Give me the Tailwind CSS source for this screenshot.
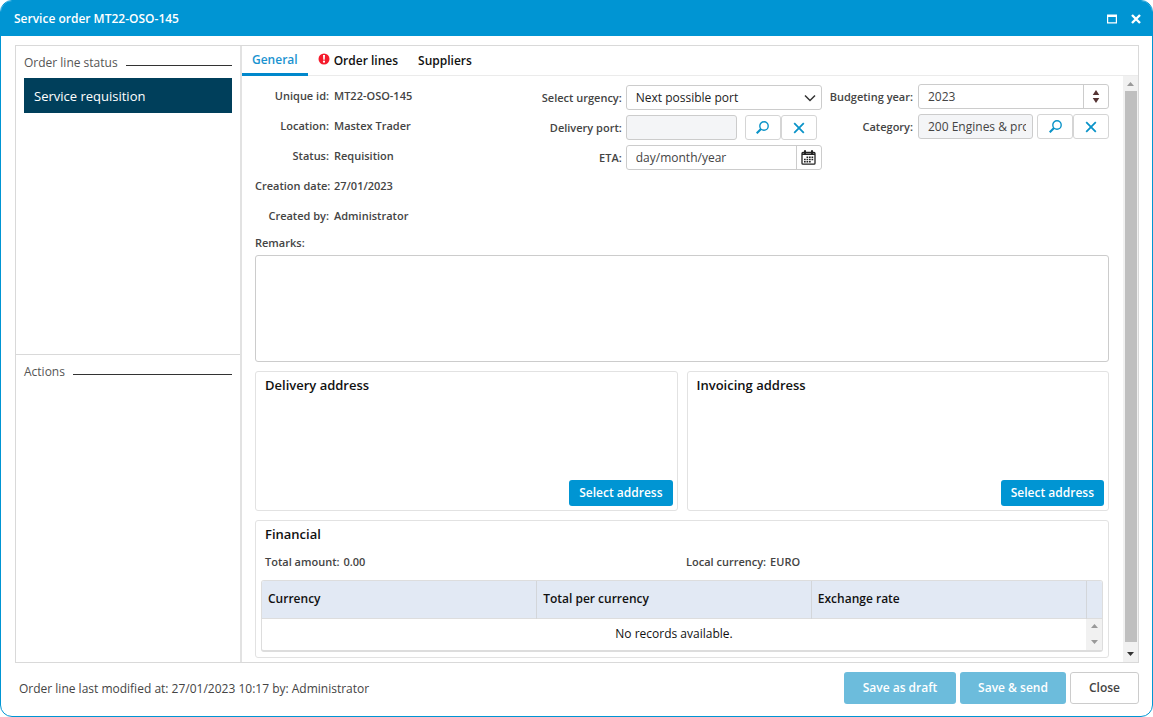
<!DOCTYPE html>
<html lang="en">
<head>
<meta charset="utf-8">
<meta name="viewport" content="width=device-width, initial-scale=1">
<title>Service order MT22-OSO-145</title>
<script src="https://cdn.jsdelivr.net/npm/@tailwindcss/browser@4"></script>
</head>
<body class="min-h-screen bg-white font-['Open_Sans','Noto_Sans',sans-serif] text-[12px] leading-4 text-[#444]">
<div class="flex min-h-screen flex-col overflow-hidden rounded-xl border border-[#0095d3] bg-white">
  <header class="flex h-[35px] items-center justify-between bg-[#0095d3] pr-2.5 pl-[13px] text-white">
    <h1 class="text-[12px] font-semibold">Service order MT22-OSO-145</h1>
    <div class="flex items-center gap-3">
      <button type="button" aria-label="Maximize"><svg class="block h-3 w-3" viewBox="0 0 12 12"><path d="M1 1.500h10v9H1z M2.200 4v5.300h7.600V4z" fill="#fff" fill-rule="evenodd"/></svg></button>
      <button type="button" aria-label="Close window"><svg class="block h-3 w-3" viewBox="0 0 12 12"><path d="M2 2l8 8M10 2l-8 8" stroke="#fff" stroke-width="2.400"/></svg></button>
    </div>
  </header>

  <div class="mt-[9px] mr-[13px] ml-[14px] flex flex-1 border border-[#d9d9d9]">
    <aside class="flex w-[226px] shrink-0 flex-col border-r-2 border-[#e2e2e2]">
      <section class="h-[309px] border-b border-[#d9d9d9] px-2 pt-[9px]">
        <div class="flex items-center gap-2">
          <h2 class="text-[12px] text-[#555]">Order line status</h2>
          <span class="mt-1 h-px flex-1 bg-[#333]"></span>
        </div>
        <button type="button" class="mt-[7px] block h-[35px] w-full bg-[#003f5b] px-2.5 text-left text-[13px] text-white">Service requisition</button>
      </section>
      <section class="px-2 pt-[9px]">
        <div class="flex items-center gap-2">
          <h2 class="text-[12px] text-[#555]">Actions</h2>
          <span class="mt-1 h-px flex-1 bg-[#333]"></span>
        </div>
      </section>
    </aside>

    <main class="flex min-w-0 flex-1 flex-col">
      <nav class="flex h-[30px] border-b border-[#ebebeb] text-[12px] font-semibold text-[#111]">
        <button type="button" class="h-[30px] border-b-3 border-[#0088cc] px-[10px] pt-px text-[#1a93d0]">General</button>
        <button type="button" class="flex items-center gap-1 px-[10px]">
          <svg class="-mt-1 h-3 w-3" viewBox="0 0 12 12"><circle cx="6" cy="6" r="5.500" fill="#f51b2c"/><path d="M5 2h2l-.3 4.800H5.300z" fill="#fff"/><circle cx="6" cy="8.700" r="1.100" fill="#fff"/></svg>Order lines</button>
        <button type="button" class="px-[10px]">Suppliers</button>
      </nav>

      <div class="flex flex-1">
        <div class="min-w-0 flex-1 pt-2 pr-[14px] pb-1 pl-[13px]">
          <form>
            <div class="flex gap-2">
              <dl class="grid flex-1 auto-rows-[30px] grid-cols-[74px_1fr] content-start items-start gap-x-[5px] pt-1 text-[11px] font-semibold">
                <dt class="text-right whitespace-nowrap">Unique id:</dt><dd>MT22-OSO-145</dd>
                <dt class="text-right whitespace-nowrap">Location:</dt><dd>Mastex Trader</dd>
                <dt class="text-right whitespace-nowrap">Status:</dt><dd>Requisition</dd>
                <dt class="text-right whitespace-nowrap">Creation date:</dt><dd>27/01/2023</dd>
                <dt class="text-right whitespace-nowrap">Created by:</dt><dd>Administrator</dd>
              </dl>

              <div class="grid grid-cols-[auto_196px] content-start items-center gap-x-1 gap-y-[5px] pt-px">
                <label for="urgency" class="text-right text-[11px] font-semibold">Select urgency:</label>
                <div class="relative">
                  <select id="urgency" class="block h-[25px] w-full appearance-none rounded-[3px] border border-[#ccc] bg-white pl-[9px] text-[12px] text-[#222]"><option>Next possible port</option></select>
                  <svg class="pointer-events-none absolute top-[7px] right-1.5 h-3 w-3" viewBox="0 0 12 12" fill="none"><path d="M1 3.500l5 5 5-5" stroke="#333" stroke-width="1.500"/></svg>
                </div>
                <label for="port" class="text-right text-[11px] font-semibold">Delivery port:</label>
                <div class="flex">
                  <input id="port" type="text" readonly class="h-[25px] w-[111px] rounded-[3px] border border-[#ccc] bg-[#f4f5f7] px-[9px] text-[12px]">
                  <button type="button" aria-label="Search port" class="ml-2 flex h-[25px] w-9 items-center justify-center rounded-[3px] border border-[#d5d5d5]"><svg class="h-[13px] w-[13px]" viewBox="0 0 13 13" fill="none" stroke="#0a93c8"><circle cx="8" cy="5" r="4.200" stroke-width="1.400"/><path d="M5 8L.7 12.300" stroke-width="2.100"/></svg></button>
                  <button type="button" aria-label="Clear port" class="flex h-[25px] w-9 items-center justify-center rounded-[3px] border border-[#d5d5d5]"><svg class="h-3 w-3" viewBox="0 0 12 12"><path d="M1.200 1.200l9.600 9.600M10.800 1.200l-9.600 9.600" stroke="#0a93c8" stroke-width="1.800"/></svg></button>
                </div>
                <label for="eta" class="text-right text-[11px] font-semibold">ETA:</label>
                <div class="flex h-[25px] rounded-[3px] border border-[#ccc]">
                  <input id="eta" type="text" value="day/month/year" class="min-w-0 flex-1 px-[9px] text-[12px]">
                  <button type="button" aria-label="Open calendar" class="flex w-[25px] items-center justify-center border-l border-[#ccc]"><svg class="h-[15px] w-[15px]" viewBox="0 0 15 15" fill="none" stroke="#222"><rect x="1" y="2.500" width="13" height="11.700" rx="1" stroke-width="1.300"/><path d="M1 4.200h13" stroke-width="1.600"/><path d="M4 .3v4M11 .3v4" stroke-width="2"/><path d="M5.500 7.300h7M3 9.500h9.500M3 11.700h7" stroke-width="1.400" stroke-dasharray="1.700 .8"/></svg></button>
                </div>
              </div>

              <div class="grid grid-cols-[auto_191px] content-start items-center gap-x-[5px] gap-y-[5px]">
                <label for="year" class="text-right text-[11px] font-semibold">Budgeting year:</label>
                <div class="flex h-[25px] rounded-[3px] border border-[#ccc]">
                  <input id="year" type="text" value="2023" class="min-w-0 flex-1 px-[9px] text-[12px]">
                  <button type="button" aria-label="Change year" class="flex w-[25px] items-center justify-center border-l border-[#ccc]"><svg class="h-[13px] w-2" viewBox="0 0 8 13" fill="#533"><path d="M4 0l3.300 5H.7zM4 13l3.300-5H.7z"/></svg></button>
                </div>
                <label for="category" class="text-right text-[11px] font-semibold">Category:</label>
                <div class="flex">
                  <div class="h-[25px] w-[115px] rounded-[3px] border border-[#ccc] bg-[#f4f5f7] pr-1.5 pl-[9px]"><input id="category" type="text" readonly value="200 Engines &amp; propulsion" class="block h-full w-full text-[12px]"></div>
                  <button type="button" aria-label="Search category" class="ml-1 flex h-[25px] w-9 items-center justify-center rounded-[3px] border border-[#d5d5d5]"><svg class="h-[13px] w-[13px]" viewBox="0 0 13 13" fill="none" stroke="#0a93c8"><circle cx="8" cy="5" r="4.200" stroke-width="1.400"/><path d="M5 8L.7 12.300" stroke-width="2.100"/></svg></button>
                  <button type="button" aria-label="Clear category" class="flex h-[25px] w-9 items-center justify-center rounded-[3px] border border-[#d5d5d5]"><svg class="h-3 w-3" viewBox="0 0 12 12"><path d="M1.200 1.200l9.600 9.600M10.800 1.200l-9.600 9.600" stroke="#0a93c8" stroke-width="1.800"/></svg></button>
                </div>
              </div>
            </div>

            <label for="remarks" class="-mt-[3px] block text-[11px] font-semibold">Remarks:</label>
            <textarea id="remarks" class="mt-1 block h-[107px] w-full resize-none rounded-[3px] border border-[#ccc] p-2 text-[12px]"></textarea>
          </form>

          <div class="mt-[9px] grid grid-cols-2 gap-[9px]">
            <section class="flex h-[140px] flex-col justify-between rounded-[3px] border border-[#e2e2e2] p-1">
              <h2 class="px-[5px] pt-px text-[13px] font-semibold text-[#111]">Delivery address</h2>
              <button type="button" class="h-[26px] self-end rounded-[3px] bg-[#0095d3] px-2.5 text-[12px] font-semibold text-white">Select address</button>
            </section>
            <section class="flex h-[140px] flex-col justify-between rounded-[3px] border border-[#e2e2e2] p-1">
              <h2 class="px-[5px] pt-px text-[13px] font-semibold text-[#111]">Invoicing address</h2>
              <button type="button" class="h-[26px] self-end rounded-[3px] bg-[#0095d3] px-2.5 text-[12px] font-semibold text-white">Select address</button>
            </section>
          </div>

          <section class="mt-[9px] rounded-[3px] border border-[#e2e2e2] px-[5px] pt-[5px] pb-[5px]">
            <h2 class="px-1 text-[13px] font-semibold text-[#111]">Financial</h2>
            <div class="mt-3 grid grid-cols-2 px-1 text-[11px] font-semibold">
              <p class="flex gap-1"><span>Total amount:</span><span>0.00</span></p>
              <p class="flex gap-1 pl-1"><span>Local currency:</span><span>EURO</span></p>
            </div>
            <div class="mt-2.5 overflow-hidden rounded-[3px] border border-b-2 border-[#ddd]">
              <table class="w-full table-fixed border-collapse text-[12px] text-[#111]">
                <thead>
                  <tr class="h-[37px] border-b border-[#ddd] bg-[#e2e9f4] text-left">
                    <th scope="col" class="border-r border-[#d3d6da] px-1.5 font-semibold">Currency</th>
                    <th scope="col" class="border-r border-[#d3d6da] px-1.5 font-semibold">Total per currency</th>
                    <th scope="col" class="border-r border-[#d3d6da] px-1.5 font-semibold">Exchange rate</th>
                    <td class="w-4"></td>
                  </tr>
                </thead>
                <tbody>
                  <tr class="h-8">
                    <td colspan="3" class="text-center">No records available.</td>
                    <td class="bg-[#f1f1f1]"><svg class="mx-auto block h-5 w-[7px]" viewBox="0 0 7 20" fill="#999"><path d="M3.500 0L7 4H0zM3.500 20L7 16H0z"/></svg></td>
                  </tr>
                </tbody>
              </table>
            </div>
          </section>
        </div>

        <div class="flex w-[15px] shrink-0 flex-col items-center bg-[#f1f1f1]" aria-hidden="true">
          <svg class="h-[15px] w-[7px]" viewBox="0 0 7 15" fill="#999"><path d="M3.500 6L7 10H0z"/></svg>
          <div class="w-3 flex-1 bg-[#bfbfbf]"></div>
          <svg class="h-5 w-[7px]" viewBox="0 0 7 20" fill="#333"><path d="M3.500 14L7 10H0z"/></svg>
        </div>
      </div>
    </main>
  </div>

  <footer class="flex items-center justify-between pt-[9px] pr-[13px] pb-3 pl-[14px]">
    <p class="pt-0.5 pl-1 text-[12px]">Order line last modified at: 27/01/2023 10:17 by: Administrator</p>
    <div class="flex gap-1 text-[12px]">
      <button type="button" class="h-8 w-[112px] rounded-[3px] bg-[#6cbcdc] font-semibold text-white">Save as draft</button>
      <button type="button" class="h-8 w-[106px] rounded-[3px] bg-[#6cbcdc] font-semibold text-white">Save &amp; send</button>
      <button type="button" class="h-8 w-[69px] rounded-[3px] border border-[#ccc] bg-white font-semibold">Close</button>
    </div>
  </footer>
</div>
</body>
</html>
